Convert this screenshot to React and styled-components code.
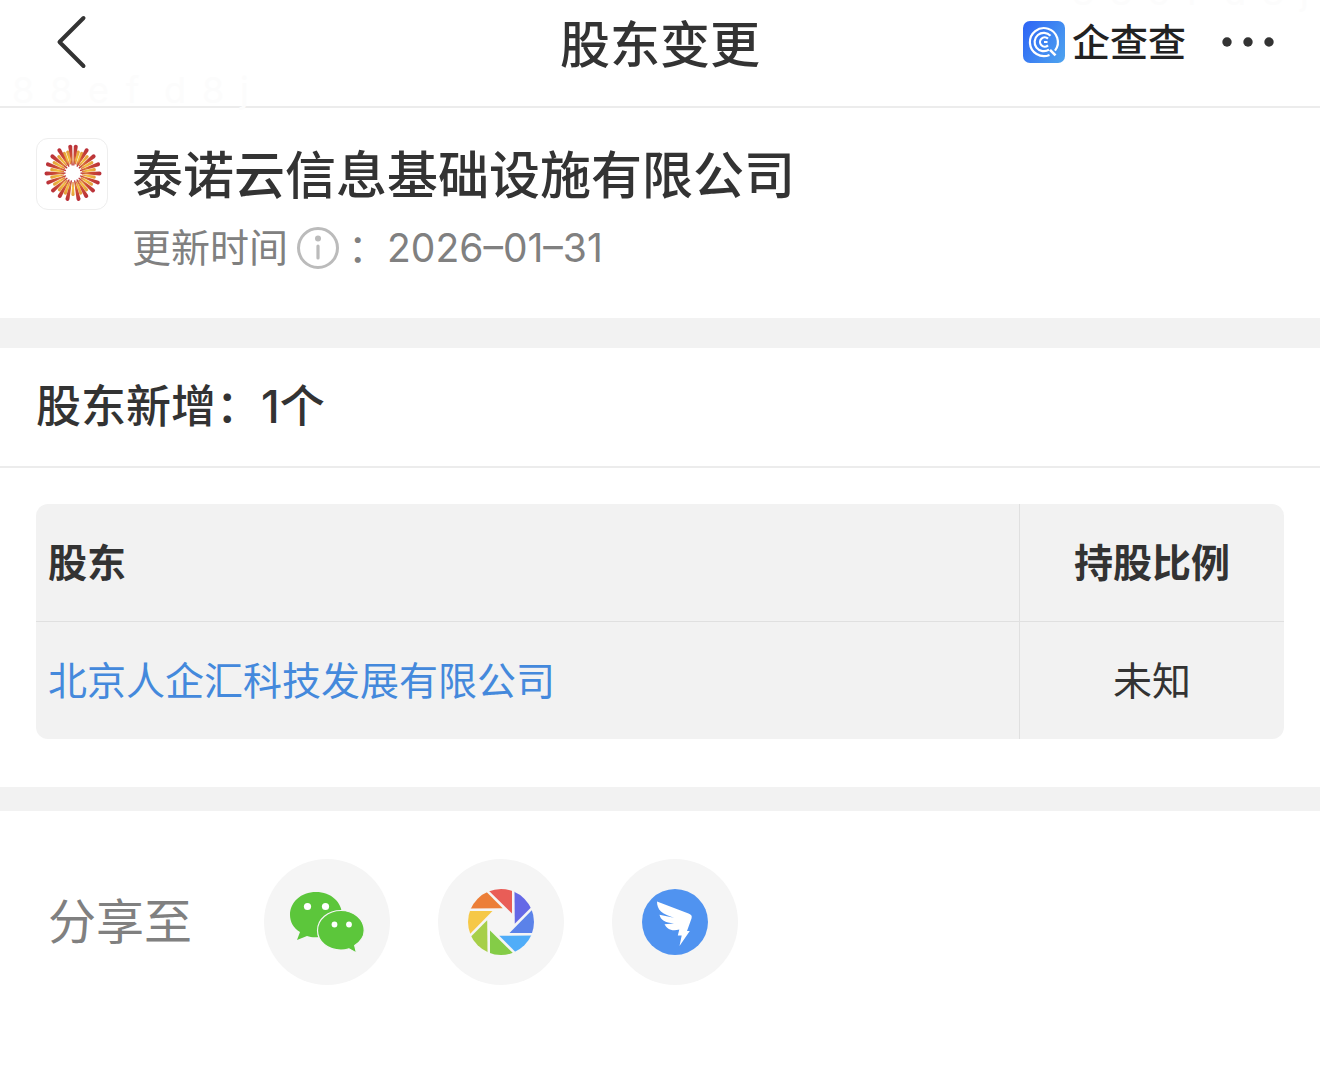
import React from 'react';
import styled, { createGlobalStyle } from 'styled-components';

const GlobalStyle = createGlobalStyle`
  *, *::before, *::after { box-sizing: border-box; }
  body {
    margin: 0;
    background: #fff;
    color: #333;
    font-family: Inter, 'Noto Sans CJK SC', sans-serif;
  }
  h1, h2, p { margin: 0; font-weight: 500; }
  button { border: 0; padding: 0; background: none; color: inherit; font: inherit; cursor: pointer; }
`;

const Page = styled.div`
  position: relative;
  overflow: hidden;
`;

const Watermark = styled.div`
  position: absolute;
  top: ${(p) => p.$top};
  left: ${(p) => p.$left};
  right: ${(p) => p.$right};
  display: grid;
  grid-template-columns: repeat(7, 38px);
  color: #fcfcfc;
  font-size: 36px;
  line-height: 44px;
  pointer-events: none;
`;

const Header = styled.header`
  display: grid;
  grid-template-columns: 1fr auto 1fr;
  align-items: start;
  padding: 0 36px 16px;
  border-bottom: 2px solid #ececec;
`;

const BackButton = styled.button`
  justify-self: start;
  display: flex;
  align-items: center;
  justify-content: center;
  width: 70px;
  height: 84px;
`;

const PageTitle = styled.h1`
  font-size: 50px;
  line-height: 90px;
`;

const HeaderTools = styled.div`
  display: flex;
  justify-self: end;
  align-items: center;
  gap: 28px;
`;

const Brand = styled.a`
  display: flex;
  align-items: center;
  gap: 7px;
  color: #222;
  font-size: 38px;
  font-weight: 500;
  line-height: 56px;
  text-decoration: none;
`;

const MoreButton = styled.button`
  display: flex;
  align-items: center;
  justify-content: center;
  width: 70px;
  height: 84px;
`;

const Company = styled.section`
  display: flex;
  gap: 24px;
  padding: 30px 36px;
`;

const CompanyLogo = styled.div`
  flex: none;
  width: 72px;
  height: 72px;
  border: 1px solid #eee;
  border-radius: 12px;
`;

const CompanyName = styled.h2`
  font-size: 51px;
  line-height: 76px;
`;

const Updated = styled.p`
  display: flex;
  align-items: center;
  padding-bottom: 6px;
  color: #808080;
  font-size: 39px;
  font-weight: 400;
  line-height: 68px;
`;

const InfoButton = styled.button`
  display: flex;
  margin: 0 8px;
`;

const Band = styled.div`
  height: ${(p) => p.$height};
  background: #f2f2f2;
`;

const SectionTitle = styled.h2`
  padding: 24px 36px;
  border-bottom: 2px solid #ececec;
  font-size: 45px;
  line-height: 70px;
`;

const TableWrap = styled.section`
  padding: 36px 36px 48px;
`;

const Table = styled.table`
  width: 100%;
  border-spacing: 0;
  border-radius: 12px;
  background: #f2f2f2;
  font-size: 39px;
  line-height: 57px;
  th, td { padding: 30px 12px; text-align: center; }
  th { border-bottom: 1px solid #e0e0e0; }
  th:first-child, td:first-child { border-right: 1px solid #e0e0e0; text-align: left; }
  th:last-child { width: 264px; }
`;

const HolderLink = styled.a`
  color: #4489dc;
  text-decoration: none;
`;

const Share = styled.section`
  display: flex;
  align-items: center;
  gap: 48px;
  padding: 48px;
`;

const ShareLabel = styled.span`
  width: 168px;
  color: #808080;
  font-size: 48px;
  line-height: 70px;
`;

const ShareButton = styled.button`
  display: flex;
  align-items: center;
  justify-content: center;
  width: 126px;
  height: 126px;
  border-radius: 50%;
  background: #f5f5f5;
`;

const watermarkChars = [...'88efd8j'];

const rayAngles = [6, 31, 51, 71, 91, 111, 131, 150, 168, 192, 210, 229, 249, 269, 289, 309, 329, 354];
const glowAngles = [14, 24, 41, 61, 81, 101, 121, 141, 159, 180, 201, 219, 239, 259, 279, 299, 319, 336, 346];

const Sunburst = () => (
  <svg width="70" height="70" viewBox="-36 -34 70 70" aria-hidden="true">
    <defs>
      <linearGradient id="ray" gradientUnits="userSpaceOnUse" x1="0" y1="-28" x2="0" y2="-8">
        <stop offset="0" stopColor="#b9303a" />
        <stop offset="0.5" stopColor="#cc4a34" />
        <stop offset="0.75" stopColor="#dd7a36" />
        <stop offset="1" stopColor="#bb3038" />
      </linearGradient>
      <linearGradient id="glow" gradientUnits="userSpaceOnUse" x1="0" y1="-24" x2="0" y2="-8">
        <stop offset="0" stopColor="#e09a3c" />
        <stop offset="0.6" stopColor="#f4c03c" />
        <stop offset="1" stopColor="#d8683a" />
      </linearGradient>
    </defs>
    {glowAngles.map((a) => (
      <path key={a} transform={`rotate(${a})`} d="M-.6-9-1.600-21.500a1.600 1.600 0 0 1 3.200 0L.6-9Z" fill="url(#glow)" />
    ))}
    {rayAngles.map((a) => (
      <path key={a} transform={`rotate(${a})`} d="M-.6-7.500-2-26.500a2 2 0 0 1 4 0L.6-7.500Z" fill="url(#ray)" />
    ))}
  </svg>
);

const BrandMark = () => (
  <svg width="42" height="42" viewBox="0 0 42 42" fill="none" aria-hidden="true">
    <defs>
      <linearGradient id="brand" x1="0" y1="0.2" x2="1" y2="0.8">
        <stop stopColor="#2f68f5" />
        <stop offset="1" stopColor="#4ca0ef" />
      </linearGradient>
    </defs>
    <rect width="42" height="42" rx="7" fill="url(#brand)" />
    <g stroke="#fff" strokeWidth="2.200">
      <path d="M26.500 33.900A14 14 0 1 1 32 29.600" />
      <path d="M27 28.800l5.500 5.500" strokeWidth="2.600" />
      <path d="M27.500 14.700A9.200 9.200 0 1 0 26 28.600" />
      <path d="M25 17.600A4.700 4.700 0 1 0 25 24.400M24.500 21H21" />
    </g>
  </svg>
);

const WeChat = () => (
  <svg width="76" height="62" viewBox="0 0 76 62" aria-hidden="true">
    <path fill="#5cc63b" d="M27 1C12 1 1 11 1 24c0 7 3.500 13 10 17L8 49l10-4c3 1 6 1.400 10 1.200C42 45 53 36 53 24 53 11 42 1 27 1Z" />
    <path fill="#5cc63b" stroke="#f5f5f5" strokeWidth="1.200" d="M52 19.500c-13 0-23.500 8.800-23.500 20S39 59 52 59c3 0 5.500-.4 8-1.200L67.500 62l-1.800-7.500c5.800-3.700 9.500-8.800 9.500-15C75.200 28.300 65 19.500 52 19.500Z" />
    <g fill="#fff"><circle cx="18.500" cy="15.500" r="3.600" /><circle cx="36.500" cy="15.500" r="3.600" /><circle cx="45.500" cy="33.500" r="2.900" /><circle cx="60" cy="33.500" r="2.900" /></g>
  </svg>
);

const blades = ['#e95d57', '#6568e6', '#5b82e9', '#50adf8', '#84cc47', '#a7cf49', '#f6c847', '#ec7e37'];

const Moments = () => (
  <svg width="66" height="66" viewBox="-33 -33 66 66" aria-hidden="true">
    <defs><clipPath id="disc"><circle r="33" /></clipPath></defs>
    <g clipPath="url(#disc)">
      {blades.map((c, i) => (
        <g key={c} transform={`rotate(${i * 45})`}>
          <path fill={c} d="M11-8.500V-36H-17Z" />
        </g>
      ))}
    </g>
  </svg>
);

const DingTalk = () => (
  <svg width="66" height="66" viewBox="0 0 66 66" aria-hidden="true">
    <circle cx="33" cy="33" r="33" fill="#5093f0" />
    <path fill="#fff" d="M15 12.500 46.500 24.500C49.500 25.700 50.300 27 49.500 29.500L45 42H47.800L37.500 57 39.700 46.500H35.800L37.300 40.500C29 43 24.500 39 22.500 35.200L32 34.600C23 33.600 18.500 31 17.500 25.800L32 28.800C20 25 15 21 15 12.500Z" />
  </svg>
);

export default function App() {
  return (
    <Page lang="zh-CN">
      <GlobalStyle />
      <Watermark $top="68px" $left="12px" aria-hidden="true">
        {watermarkChars.map((c, i) => <span key={i}>{c}</span>)}
      </Watermark>
      <Watermark $top="-30px" $right="-18px" aria-hidden="true">
        {watermarkChars.map((c, i) => <span key={i}>{c}</span>)}
      </Watermark>
      <Header>
        <BackButton type="button" aria-label="返回">
          <svg width="32" height="54" viewBox="0 0 32 54" fill="none" aria-hidden="true">
            <path d="M28.500 3 4.500 27l24 24" stroke="#333" strokeWidth="4" strokeLinecap="round" strokeLinejoin="round" />
          </svg>
        </BackButton>
        <PageTitle>股东变更</PageTitle>
        <HeaderTools>
          <Brand href="#"><BrandMark />企查查</Brand>
          <MoreButton type="button" aria-label="更多">
            <svg width="54" height="10" viewBox="0 0 54 10" fill="#333" aria-hidden="true">
              <circle cx="5" cy="5" r="4.700" /><circle cx="26" cy="5" r="4.700" /><circle cx="47" cy="5" r="4.700" />
            </svg>
          </MoreButton>
        </HeaderTools>
      </Header>
      <main>
        <Company>
          <CompanyLogo><Sunburst /></CompanyLogo>
          <div>
            <CompanyName>泰诺云信息基础设施有限公司</CompanyName>
            <Updated>
              更新时间
              <InfoButton type="button" aria-label="更新时间说明">
                <svg width="44" height="44" viewBox="0 0 44 44" fill="none" aria-hidden="true">
                  <circle cx="22" cy="22" r="19.500" stroke="#bbb" strokeWidth="3" />
                  <circle cx="22" cy="12.500" r="3" fill="#bbb" />
                  <path d="M22 20v12" stroke="#bbb" strokeWidth="3.200" strokeLinecap="round" />
                </svg>
              </InfoButton>
              ：<time dateTime="2026-01-31">2026–01–31</time>
            </Updated>
          </div>
        </Company>
        <Band $height="30px" />
        <SectionTitle>股东新增：1个</SectionTitle>
        <TableWrap>
          <Table>
            <thead><tr><th scope="col">股东</th><th scope="col">持股比例</th></tr></thead>
            <tbody><tr><td><HolderLink href="#">北京人企汇科技发展有限公司</HolderLink></td><td>未知</td></tr></tbody>
          </Table>
        </TableWrap>
        <Band $height="24px" />
        <Share>
          <ShareLabel>分享至</ShareLabel>
          <ShareButton type="button" aria-label="微信"><WeChat /></ShareButton>
          <ShareButton type="button" aria-label="朋友圈"><Moments /></ShareButton>
          <ShareButton type="button" aria-label="钉钉"><DingTalk /></ShareButton>
        </Share>
      </main>
    </Page>
  );
}
